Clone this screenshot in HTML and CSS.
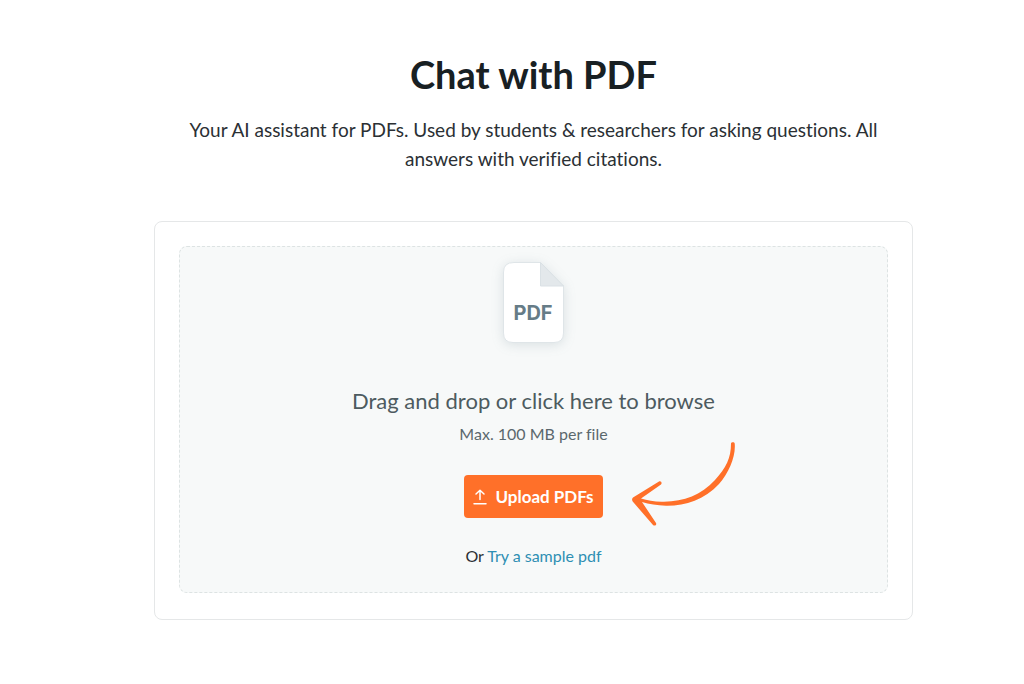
FILE: index.html
```html
<!DOCTYPE html>
<html lang="en">
<head>
<meta charset="utf-8">
<meta name="viewport" content="width=device-width, initial-scale=1">
<title>Chat with PDF</title>
<link rel="stylesheet" href="styles.css">
</head>
<body>
<main class="page">
  <header class="intro">
    <h1 class="title">Chat with PDF</h1>
    <p class="subtitle">Your AI assistant for PDFs. Used by students &amp; researchers for asking questions. All answers with verified citations.</p>
  </header>
  <section class="card" aria-label="Upload">
    <div class="dropzone">
      <svg class="file-icon" width="101" height="120" viewBox="0 0 101 120" aria-hidden="true">
        <path class="file-sheet" d="M31 15.500H57.500L80.500 39V86Q80.500 95.500 71 95.500H30Q20.500 95.500 20.500 86V25Q20.500 15.500 31 15.500Z"/>
        <path class="file-fold" d="M57.500 15.500V39H80.500Z"/>
        <text class="file-label" x="50" y="73" text-anchor="middle">PDF</text>
      </svg>
      <p class="prompt">Drag and drop or click here to browse</p>
      <p class="limit">Max. 100 MB per file</p>
      <div class="action">
        <button class="upload" type="button">
          <svg width="14" height="16" viewBox="0 0 14 16" fill="none" stroke="currentColor" stroke-width="1.500" stroke-linecap="round" stroke-linejoin="round" aria-hidden="true">
            <path d="M7 10.500V1.500M3 5L7 1.200L11 5M1 14.800H13"/>
          </svg>
          Upload PDFs
        </button>
        <svg class="arrow" width="160" height="110" viewBox="0 0 160 110" aria-hidden="true">
          <path d="M131 13.500C131 12 134.500 11.500 134.700 13.500C136 26 129 43 119 54C104 70 85 76 66 75.700C57 75.600 49 74 42 72L56 93C57 95 54.500 96.500 53 95L32.700 71.500C31.800 70 31.800 68.500 33 67.500L59 51.500C61 50.500 62.500 53 61 54.500L41 68.500C48 70.500 55 72 64 71.700C84 71.500 101 65 115 50C126 38 131 28 131 13.500Z"/>
        </svg>
      </div>
      <p class="sample">Or <a class="sample-link" href="#sample">Try a sample pdf</a></p>
    </div>
  </section>
</main>
</body>
</html>
```
FILE: styles.css
```css
* {
  box-sizing: border-box;
}

body {
  margin: 0;
  background: #fff;
  color: #2b3034;
  font-family: Lato, "Open Sans", sans-serif;
  font-variant-ligatures: none;
}

h1, p {
  margin: 0;
}

.page {
  max-width: 802px;
  margin: 0 auto;
  padding: 50px 0 64px 43px;
  text-align: center;
}

.title {
  color: #182023;
  font-size: 38px;
  line-height: 48px;
  font-weight: 700;
}

.subtitle {
  margin-top: 17px;
  padding: 0 24px;
  font-size: 19px;
  line-height: 29px;
}

.card {
  margin-top: 48px;
  padding: 24px 24px 26px;
  border: 1px solid #e5e7e8;
  border-radius: 8px;
}

.dropzone {
  display: flex;
  flex-direction: column;
  align-items: center;
  padding-bottom: 24px;
  border: 1px dashed #dde3e3;
  border-radius: 8px;
  background: #f7f9f9;
}

.file-sheet {
  fill: #fff;
  stroke: #dfe5e8;
  filter: drop-shadow(0 2px 6px rgba(70, 100, 115, 0.16));
}

.file-fold {
  fill: #e3e8eb;
  stroke: #dae1e5;
  stroke-linejoin: round;
}

.file-label {
  fill: #667c87;
  font-family: Inter, sans-serif;
  font-size: 20px;
  font-weight: 700;
}

.prompt {
  margin-top: 19px;
  color: #4d5b60;
  font-size: 22px;
  line-height: 30px;
}

.limit {
  margin-top: 6px;
  color: #5b686d;
  font-size: 16px;
  line-height: 24px;
}

.action {
  position: relative;
  margin-top: 29px;
}

.upload {
  display: flex;
  align-items: center;
  gap: 8px;
  padding: 10px 9px;
  border: 0;
  border-radius: 4px;
  background: #ff7029;
  color: #fff;
  font-family: inherit;
  font-size: 17px;
  line-height: 23px;
  font-weight: 700;
}

.arrow {
  position: absolute;
  top: -45px;
  left: 136px;
  fill: #ff7029;
  pointer-events: none;
}

.sample {
  margin-top: 26px;
  font-size: 16px;
  line-height: 24px;
}

.sample-link {
  color: #2e8fb3;
  text-decoration: none;
}
```
